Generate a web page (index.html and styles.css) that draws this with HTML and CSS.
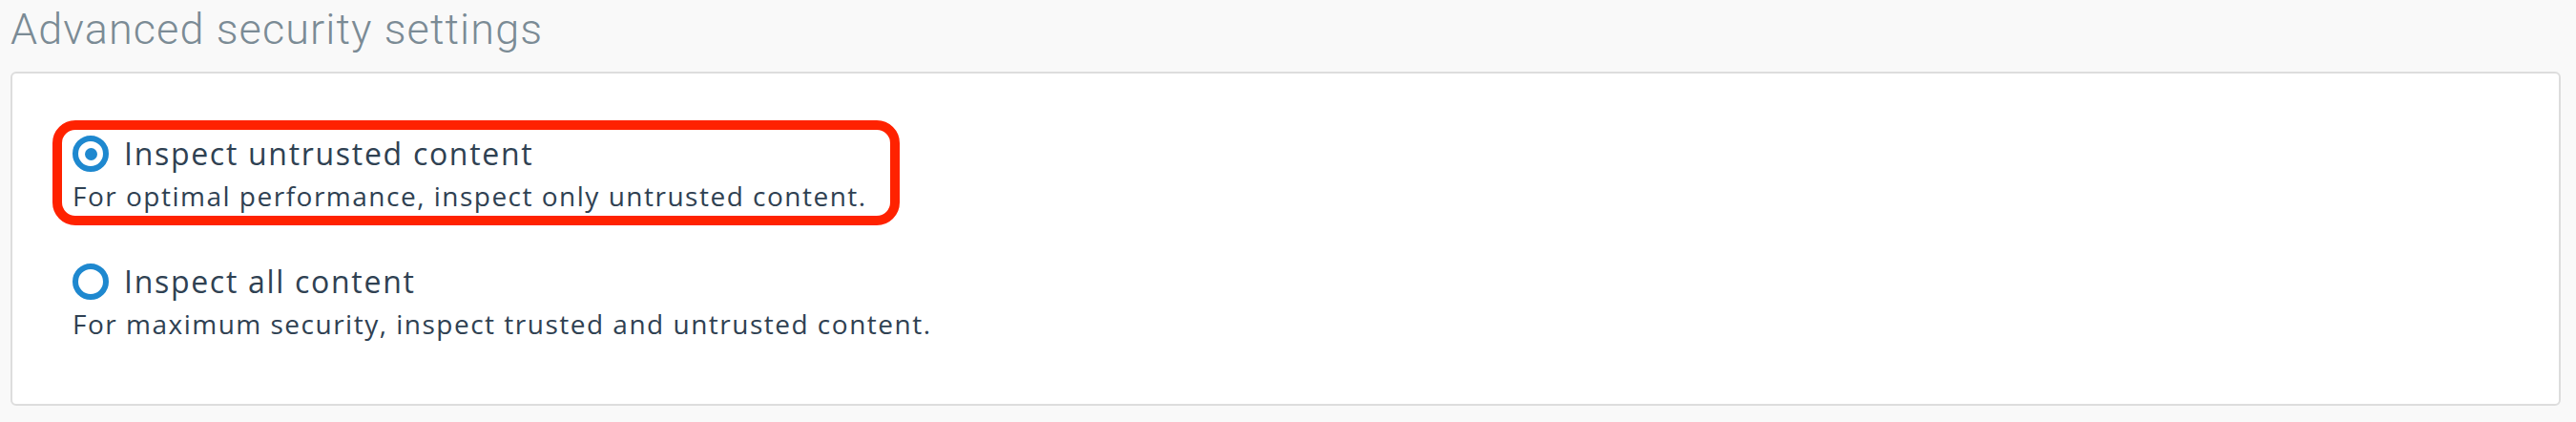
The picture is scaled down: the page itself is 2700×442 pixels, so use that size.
FILE: index.html
```html
<!DOCTYPE html>
<html>
<head>
<meta charset="utf-8">
<link rel="stylesheet" href="styles.css">
</head>
<body>
<div class="page">
  <h1 class="title">Advanced security settings</h1>
  <div class="card">
    <div class="option option-highlight">
      <div class="option-head">
        <span class="radio radio-checked"></span>
        <span class="option-label">Inspect untrusted content</span>
      </div>
      <div class="option-desc">For optimal performance, inspect only untrusted content.</div>
    </div>
    <div class="option">
      <div class="option-head">
        <span class="radio"></span>
        <span class="option-label">Inspect all content</span>
      </div>
      <div class="option-desc">For maximum security, inspect trusted and untrusted content.</div>
    </div>
  </div>
</div>
</body>
</html>
```
FILE: styles.css
```css
html, body {
  margin: 0;
  padding: 0;
  background: #f9f9f9;
}
.page {
  padding: 5px 16px 0 11px;
  font-family: Roboto, "Liberation Sans", sans-serif;
}
.title {
  margin: 0;
  height: 70px;
  font-size: 45px;
  line-height: 52px;
  font-weight: 300;
  color: #7b8b95;
  letter-spacing: 1.1px;
}
.card {
  background: #fff;
  border: 2px solid #dddddd;
  border-radius: 6px;
  padding: 64px 0 0 63px;
  box-sizing: border-box;
  height: 350px;
  display: flex;
  flex-direction: column;
  gap: 52px;
}
.option {
  position: relative;
  display: flex;
  flex-direction: column;
  gap: 6px;
}
.option-highlight::before {
  content: "";
  position: absolute;
  left: -21px;
  top: -15px;
  width: 888px;
  height: 110px;
  box-sizing: border-box;
  border: 10px solid #ff2200;
  border-radius: 24px;
}
.option-head {
  display: flex;
  align-items: center;
  gap: 16px;
  height: 40px;
}
.radio {
  width: 38px;
  height: 38px;
  box-sizing: border-box;
  border: 6px solid #1e88cf;
  border-radius: 50%;
  display: flex;
  align-items: center;
  justify-content: center;
  flex: none;
}
.radio-checked::after {
  content: "";
  width: 13px;
  height: 13px;
  border-radius: 50%;
  background: #1e88cf;
}
.option-label {
  font-family: "Open Sans", Roboto, sans-serif;
  font-size: 32px;
  line-height: 40px;
  color: #2f4152;
  letter-spacing: 1.7px;
}
.option-desc {
  font-family: "Open Sans", Roboto, sans-serif;
  font-size: 28px;
  line-height: 36px;
  color: #2f4152;
  letter-spacing: 1.5px;
}
```
